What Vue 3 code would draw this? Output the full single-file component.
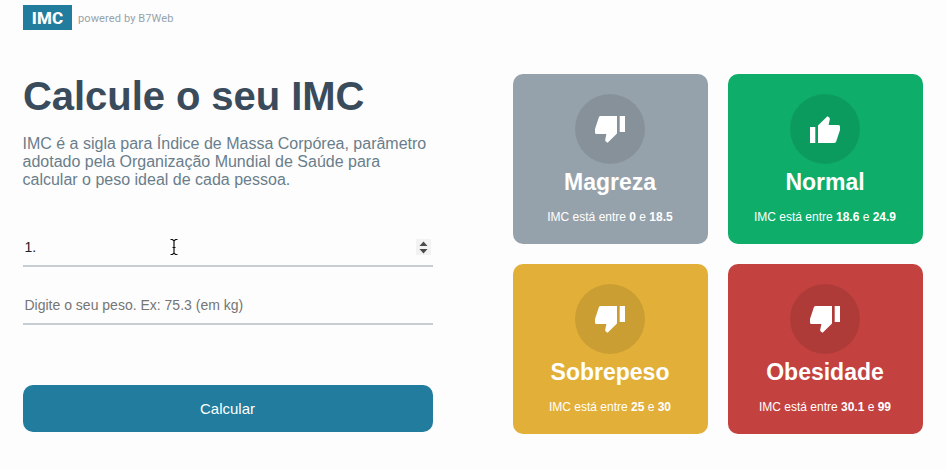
<script setup>
import { ref } from 'vue'

const height = ref('1.')
const weight = ref('')

const levels = [
  { title: 'Magreza', color: '#96a2ab', icon: 'down', range: ['0', '18.5'] },
  { title: 'Normal', color: '#0ead69', icon: 'up', range: ['18.6', '24.9'] },
  { title: 'Sobrepeso', color: '#e2b039', icon: 'down', range: ['25', '30'] },
  { title: 'Obesidade', color: '#c3423f', icon: 'down', range: ['30.1', '99'] },
]
</script>

<template>
  <div class="page">
    <header class="header">
      <span class="logo">IMC</span>
      <span class="powered">powered by B7Web</span>
    </header>
    <main class="container">
      <section class="left">
        <h1>Calcule o seu IMC</h1>
        <p class="intro">
          IMC é a sigla para Índice de Massa Corpórea, parâmetro adotado pela
          Organização Mundial de Saúde para calcular o peso ideal de cada pessoa.
        </p>
        <div class="field">
          <input v-model="height" type="text" aria-label="Altura" />
          <span class="spinner">
            <svg width="15" height="16" viewBox="0 0 15 16">
              <path d="M7.5 2.500 11.500 7H3.500zM7.500 14.500 3.500 10h8z" fill="#4a4a4a" />
            </svg>
          </span>
          <svg class="cursor" width="8" height="18" viewBox="0 0 8 18">
            <path
              d="M.5 1.5H2.5L4 3 5.500 1.500H7.500M4 3V15M.5 16.500H2.500L4 15 5.500 16.500H7.500M2.500 9.500H5.500"
              fill="none"
              stroke="#111"
              stroke-width="1.200"
            />
          </svg>
        </div>
        <div class="field">
          <input v-model="weight" type="text" placeholder="Digite o seu peso. Ex: 75.3 (em kg)" />
        </div>
        <button type="button">Calcular</button>
      </section>
      <section class="grid">
        <article v-for="item in levels" :key="item.title" class="card" :style="{ backgroundColor: item.color }">
          <div class="circle">
            <svg :class="['thumb', item.icon]" width="30" height="27" viewBox="0 0 30 27">
              <path
                d="M0 11H5.300V27H0zM8 27V9.500L17.400 0.200 19.200 1.500Q20 2.200 19.800 3.300L18.600 9H28.500Q30 9 30 10.500V14L26.200 25.600Q25.700 27 24.300 27z"
                fill="#fff"
              />
            </svg>
          </div>
          <h2>{{ item.title }}</h2>
          <p class="range">
            IMC está entre <strong>{{ item.range[0] }}</strong> e <strong>{{ item.range[1] }}</strong>
          </p>
        </article>
      </section>
    </main>
  </div>
</template>

<style>
body {
  background: #fdfdfd;
  overflow: hidden;
}
</style>

<style scoped>
.page {
  box-sizing: border-box;
  width: 946px;
  height: 470px;
  padding: 5px 23px 0;
  font-family: "Liberation Sans", Arial, sans-serif;
}
.header {
  display: flex;
  align-items: center;
  gap: 6px;
  height: 25px;
  font-family: Roboto, sans-serif;
}
.logo {
  width: 49px;
  height: 25px;
  line-height: 26px;
  text-align: center;
  background: #227c9d;
  color: #fff;
  font-size: 17px;
  font-weight: 800;
  letter-spacing: 0.2px;
}
.powered {
  padding-top: 1px;
  color: #96a3ab;
  font-size: 11px;
  letter-spacing: 0.12px;
}
.container {
  display: flex;
  gap: 80px;
  margin-top: 44px;
}
.left {
  width: 410px;
}
h1 {
  margin: 0;
  font-size: 40px;
  line-height: 44px;
  letter-spacing: -0.06px;
  color: #3a4b5c;
  white-space: nowrap;
}
.intro {
  margin: 17px 0 38px -0.5px;
  font-size: 16px;
  line-height: 18px;
  color: #6a7d8b;
}
.field {
  position: relative;
  display: flex;
  align-items: center;
  box-sizing: border-box;
  height: 40px;
  padding-top: 1px;
  margin-bottom: 18px;
  border-bottom: 2px solid #c8cdd1;
}
input {
  flex: 1;
  min-width: 0;
  padding: 0 1.5px;
  border: 0;
  outline: 0;
  background: transparent;
  font-family: inherit;
  font-size: 14px;
  color: #222;
}
input::placeholder {
  color: #757575;
}
.spinner {
  width: 15px;
  height: 16px;
  margin-right: 2px;
  background: #f2f2f2;
}
.spinner svg {
  display: block;
}
.cursor {
  position: absolute;
  left: 147px;
  top: 11px;
}
button {
  display: block;
  width: 410px;
  height: 47px;
  margin-top: 60px;
  padding: 0 1px 0 0;
  border: 0;
  border-radius: 10px;
  background: #227c9d;
  color: #fff;
  font-family: inherit;
  font-size: 15px;
}
.grid {
  display: grid;
  grid-template-columns: 195px 195px;
  grid-auto-rows: 170px;
  gap: 20px;
}
.card {
  display: flex;
  flex-direction: column;
  align-items: center;
  box-sizing: border-box;
  padding: 20px 1px 0 0;
  border-radius: 10px;
  color: #fff;
}
.circle {
  display: flex;
  align-items: center;
  justify-content: center;
  width: 70px;
  height: 70px;
  border-radius: 50%;
  background: rgba(0, 0, 0, 0.1);
}
.thumb.down {
  transform: rotate(180deg);
}
h2 {
  margin: 5px 0 0;
  font-size: 23px;
  line-height: 27px;
}
.range {
  margin: 14px 0 0;
  font-size: 12px;
  line-height: 14px;
}
</style>
